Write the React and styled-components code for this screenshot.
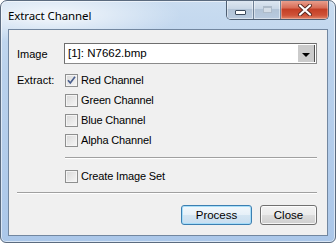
import React from 'react';
import styled, { createGlobalStyle } from 'styled-components';

const GlobalStyle = createGlobalStyle`
  html, body {
    margin: 0;
    padding: 0;
    background: #ffffff;
  }
  body {
    font-family: "Liberation Sans", Arial, sans-serif;
    font-size: 11px;
    color: #000;
  }
`;

const App = () => {
  return (
    <>
      <GlobalStyle />
      <Window>
        <TitleBar>
          <Title>Extract Channel</Title>
          <CaptionGroup>
            <CaptionButton>
              <MinGlyph />
            </CaptionButton>
            <CaptionButton>
              <MaxGlyph />
            </CaptionButton>
            <CloseCaption>
              <svg width="14" height="12" viewBox="0 0 14 12">
                <path
                  d="M2 1.5 L12 10.5 M12 1.5 L2 10.5"
                  stroke="#5a2a22"
                  strokeWidth="4"
                  strokeLinecap="round"
                />
                <path
                  d="M2 1.5 L12 10.5 M12 1.5 L2 10.5"
                  stroke="#ffffff"
                  strokeWidth="2.2"
                  strokeLinecap="round"
                />
              </svg>
            </CloseCaption>
          </CaptionGroup>
        </TitleBar>
        <Client>
          <Form>
            <Row>
              <Label>Image</Label>
              <Combo>
                <ComboText>[1]: N7662.bmp</ComboText>
                <ComboButton>
                  <Arrow />
                </ComboButton>
              </Combo>
            </Row>
            <ExtractRow>
              <Label>Extract:</Label>
              <CheckList>
                <CheckItem checked label="Red Channel" />
                <CheckItem label="Green Channel" />
                <CheckItem label="Blue Channel" />
                <CheckItem label="Alpha Channel" />
              </CheckList>
            </ExtractRow>
            <InnerRule />
            <SetRow>
              <CheckItem label="Create Image Set" />
            </SetRow>
          </Form>
          <FullRule />
          <Buttons>
            <Button primary>Process</Button>
            <Button style={{ width: 57 }}>Close</Button>
          </Buttons>
        </Client>
      </Window>
    </>
  );
};

const CheckItem = ({ checked, label }) => (
  <CheckRow>
    <Box>
      {checked && (
        <svg width="11" height="11" viewBox="0 0 11 11">
          <path
            d="M2 5.2 L4.3 8 L9 1.8"
            fill="none"
            stroke="#4a5f8e"
            strokeWidth="1.7"
          />
        </svg>
      )}
    </Box>
    <span>{label}</span>
  </CheckRow>
);

const Window = styled.div`
  position: relative;
  width: 336px;
  height: 243px;
  box-sizing: border-box;
  border: 1px solid #5b6b7f;
  border-radius: 7px 7px 6px 6px;
  background:
    radial-gradient(ellipse 130px 28px at 50px 14px, rgba(255, 255, 255, 0.8), rgba(255, 255, 255, 0) 100%),
    linear-gradient(180deg, #c9dcf0 0%, #b9d1ec 30%, #abc7e9 100%);
  box-shadow: inset 0 0 0 1px rgba(255, 255, 255, 0.55);
  display: flex;
  flex-direction: column;
  overflow: hidden;
`;

const TitleBar = styled.div`
  height: 28px;
  display: flex;
  align-items: flex-start;
  padding-left: 7px;
  padding-right: 6px;
`;

const Title = styled.div`
  font-family: "Noto Sans", "Open Sans", sans-serif;
  font-size: 11.5px;
  line-height: 29px;
  color: #000;
  letter-spacing: -0.1px;
  text-shadow: 0 0 6px rgba(255, 255, 255, 0.9);
`;

const CaptionGroup = styled.div`
  margin-left: auto;
  margin-top: -1px;
  display: flex;
  height: 19px;
  border: 1px solid #4e5e72;
  border-top: none;
  border-radius: 0 0 5px 5px;
  overflow: hidden;
`;

const CaptionButton = styled.div`
  width: 26px;
  display: flex;
  align-items: center;
  justify-content: center;
  background: linear-gradient(180deg, #dfe8f2 0%, #c9d7e6 45%, #b2c3d6 50%, #b9cbe0 100%);
  border-right: 1px solid #6f8196;
  box-shadow: inset 0 0 0 1px rgba(255, 255, 255, 0.45);
`;

const MinGlyph = styled.div`
  width: 9px;
  height: 3px;
  margin-top: 5px;
  background: #fff;
  border: 1px solid #3c4a5c;
  border-radius: 1px;
`;

const MaxGlyph = styled.div`
  width: 9px;
  height: 7px;
  box-sizing: border-box;
  border: 1px solid #aebbc9;
  border-top-width: 2px;
  background: #d4dde7;
`;

const CloseCaption = styled.div`
  width: 47px;
  display: flex;
  align-items: center;
  justify-content: center;
  background: linear-gradient(180deg, #eba594 0%, #d86e58 40%, #c43f26 50%, #cf5237 80%, #e0866a 100%);
  box-shadow: inset 0 0 0 1px rgba(255, 220, 210, 0.4);
`;

const Client = styled.div`
  flex: 1;
  margin: 0 7px 6px 7px;
  border: 1px solid #7287a0;
  background: #f0f0f0;
  display: flex;
  flex-direction: column;
  padding: 13px 10px 0 8px;
`;

const Form = styled.div`
  display: flex;
  flex-direction: column;
`;

const Row = styled.div`
  display: flex;
  align-items: center;
`;

const ExtractRow = styled.div`
  display: flex;
  align-items: flex-start;
  margin-top: 9px;
`;

const Label = styled.div`
  width: 47px;
  flex-shrink: 0;
  line-height: 14px;
`;

const Combo = styled.div`
  flex: 1;
  height: 21px;
  box-sizing: border-box;
  display: flex;
  background: #fff;
  border: 1px solid #8a8a8a;
  border-top-color: #6e6e6e;
  border-left-color: #6e6e6e;
`;

const ComboText = styled.div`
  flex: 1;
  padding-left: 3px;
  line-height: 19px;
  font-size: 11.5px;
`;

const ComboButton = styled.div`
  width: 16px;
  margin: 1px 1px 1px 0;
  background: #cbcbcb;
  border-right: 1px solid #4f4f4f;
  display: flex;
  align-items: center;
  justify-content: center;
`;

const Arrow = styled.div`
  width: 0;
  height: 0;
  margin-top: 2px;
  border-left: 4px solid transparent;
  border-right: 4px solid transparent;
  border-top: 4px solid #000;
`;

const CheckList = styled.div`
  display: flex;
  flex-direction: column;
  gap: 6px;
`;

const CheckRow = styled.label`
  display: flex;
  align-items: center;
  gap: 3px;
  height: 14px;
  margin-left: 1px;
  letter-spacing: -0.15px;
`;

const Box = styled.span`
  width: 13px;
  height: 13px;
  box-sizing: border-box;
  border: 1px solid #8e8f8f;
  background: linear-gradient(135deg, #d8d8d8 0%, #f7f7f7 100%);
  box-shadow: inset 0 0 0 1px #f4f4f4;
  display: flex;
  align-items: center;
  justify-content: center;
`;

const InnerRule = styled.div`
  margin: 10px 0 0 48px;
  height: 1px;
  background: #a0a0a0;
  border-bottom: 1px solid #ffffff;
`;

const SetRow = styled.div`
  margin: 10px 0 0 47px;
`;

const FullRule = styled.div`
  margin-top: 9px;
  height: 1px;
  background: #a0a0a0;
  border-bottom: 1px solid #ffffff;
`;

const Buttons = styled.div`
  display: flex;
  justify-content: flex-end;
  gap: 8px;
  margin-top: 11px;
`;

const Button = styled.div`
  width: 71px;
  height: 20px;
  box-sizing: border-box;
  display: flex;
  align-items: center;
  justify-content: center;
  border-radius: 3px;
  font-size: 11.5px;
  border: 1px solid ${(p) => (p.primary ? '#3c7fb1' : '#707070')};
  background: ${(p) =>
    p.primary
      ? 'linear-gradient(180deg, #f2f8fc 0%, #e6f0f8 50%, #d4e5f2 51%, #c8def0 100%)'
      : 'linear-gradient(180deg, #f2f2f2 0%, #ebebeb 50%, #dddddd 51%, #cfcfcf 100%)'};
  box-shadow: inset 0 0 0 1px ${(p) => (p.primary ? 'rgba(160, 220, 250, 0.9)' : 'rgba(255, 255, 255, 0.8)')};
`;

export default App;
